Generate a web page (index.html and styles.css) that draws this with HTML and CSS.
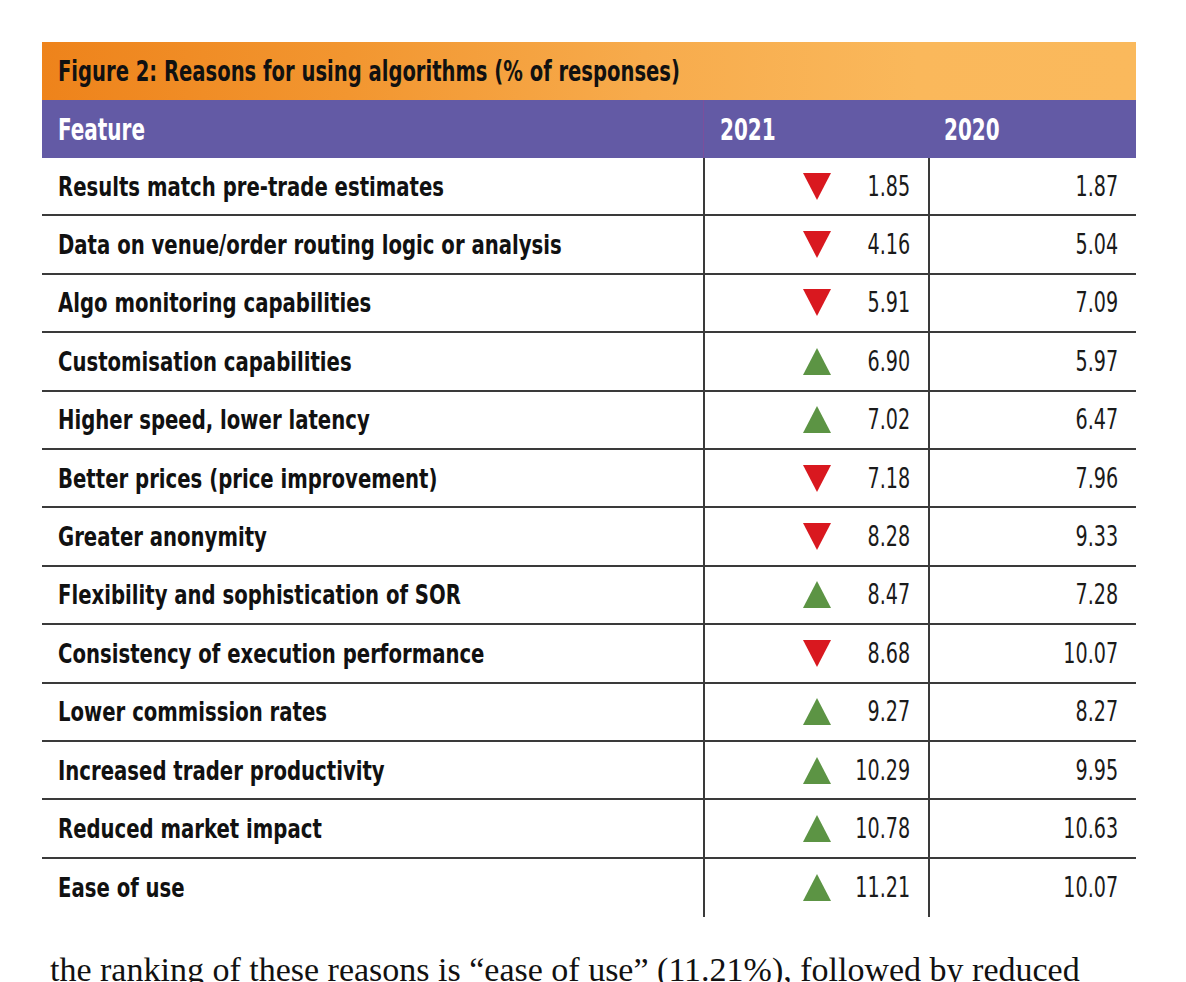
FILE: index.html
```html
<!DOCTYPE html>
<html lang="en">
<head>
<meta charset="utf-8">
<title>Figure 2: Reasons for using algorithms</title>
<link rel="stylesheet" href="styles.css">
</head>
<body>
<div class="figure">
  <div class="title"><span class="ttl">Figure 2: Reasons for using algorithms (% of responses)</span></div>
  <div class="head">
    <div class="hcell feat"><span class="hl">Feature</span></div>
    <div class="hcell y1"><span class="hl">2021</span></div>
    <div class="hcell y2"><span class="hl">2020</span></div>
  </div>
  <div class="row"><div class="cell feat"><span class="lbl">Results match pre-trade estimates</span></div><div class="cell v1"><span class="tri down"></span><span class="num">1.85</span></div><div class="cell v2"><span class="num">1.87</span></div></div>
  <div class="row"><div class="cell feat"><span class="lbl">Data on venue/order routing logic or analysis</span></div><div class="cell v1"><span class="tri down"></span><span class="num">4.16</span></div><div class="cell v2"><span class="num">5.04</span></div></div>
  <div class="row"><div class="cell feat"><span class="lbl">Algo monitoring capabilities</span></div><div class="cell v1"><span class="tri down"></span><span class="num">5.91</span></div><div class="cell v2"><span class="num">7.09</span></div></div>
  <div class="row"><div class="cell feat"><span class="lbl">Customisation capabilities</span></div><div class="cell v1"><span class="tri up"></span><span class="num">6.90</span></div><div class="cell v2"><span class="num">5.97</span></div></div>
  <div class="row"><div class="cell feat"><span class="lbl">Higher speed, lower latency</span></div><div class="cell v1"><span class="tri up"></span><span class="num">7.02</span></div><div class="cell v2"><span class="num">6.47</span></div></div>
  <div class="row"><div class="cell feat"><span class="lbl">Better prices (price improvement)</span></div><div class="cell v1"><span class="tri down"></span><span class="num">7.18</span></div><div class="cell v2"><span class="num">7.96</span></div></div>
  <div class="row"><div class="cell feat"><span class="lbl">Greater anonymity</span></div><div class="cell v1"><span class="tri down"></span><span class="num">8.28</span></div><div class="cell v2"><span class="num">9.33</span></div></div>
  <div class="row"><div class="cell feat"><span class="lbl">Flexibility and sophistication of SOR</span></div><div class="cell v1"><span class="tri up"></span><span class="num">8.47</span></div><div class="cell v2"><span class="num">7.28</span></div></div>
  <div class="row"><div class="cell feat"><span class="lbl">Consistency of execution performance</span></div><div class="cell v1"><span class="tri down"></span><span class="num">8.68</span></div><div class="cell v2"><span class="num">10.07</span></div></div>
  <div class="row"><div class="cell feat"><span class="lbl">Lower commission rates</span></div><div class="cell v1"><span class="tri up"></span><span class="num">9.27</span></div><div class="cell v2"><span class="num">8.27</span></div></div>
  <div class="row"><div class="cell feat"><span class="lbl">Increased trader productivity</span></div><div class="cell v1"><span class="tri up"></span><span class="num">10.29</span></div><div class="cell v2"><span class="num">9.95</span></div></div>
  <div class="row"><div class="cell feat"><span class="lbl">Reduced market impact</span></div><div class="cell v1"><span class="tri up"></span><span class="num">10.78</span></div><div class="cell v2"><span class="num">10.63</span></div></div>
  <div class="row last"><div class="cell feat"><span class="lbl">Ease of use</span></div><div class="cell v1"><span class="tri up"></span><span class="num">11.21</span></div><div class="cell v2"><span class="num">10.07</span></div></div>
</div>
<p class="body-text">the ranking of these reasons is “ease of use” (11.21%), followed by reduced market impact and increased trader productivity.</p>
</body>
</html>
```

FILE: styles.css
```css
html, body {
  margin: 0;
  padding: 0;
  background: #ffffff;
}

.figure {
  margin: 42px 0 0 42px;
  width: 1094px;
  font-family: "DejaVu Sans Condensed", "DejaVu Sans", sans-serif;
  color: #111111;
}

.title {
  height: 58px;
  display: flex;
  align-items: center;
  padding-left: 16px;
  box-sizing: border-box;
  background: linear-gradient(to right, #ee831b 0%, #f29630 28%, #f7ab4c 55%, #fab85b 80%, #fab95c 100%);
  font-weight: 700;
  font-size: 29px;
  color: #111111;
}

.ttl {
  display: inline-block;
  white-space: nowrap;
  transform: scaleX(0.75);
  transform-origin: left center;
}

.head {
  height: 58px;
  display: grid;
  grid-template-columns: 661px 225px 208px;
  background: #635aa5;
  color: #ffffff;
  font-weight: 700;
  font-size: 30px;
}

.hcell {
  display: flex;
  align-items: center;
  padding-left: 16px;
}

.hl {
  display: inline-block;
  white-space: nowrap;
  transform: scaleX(0.74);
  transform-origin: left center;
}

.hcell.y1 {
  border-left: 1px solid #7b4f9c;
}

.row {
  height: 58.4px;
  box-sizing: border-box;
  display: grid;
  grid-template-columns: 661px 225px 208px;
  border-bottom: 2px solid #3a3a3a;
}

.row.last {
  border-bottom: none;
}

.cell {
  display: flex;
  align-items: center;
}

.cell.feat {
  padding-left: 16px;
  font-weight: 700;
  font-size: 27px;
  color: #111111;
}

.lbl {
  display: inline-block;
  white-space: nowrap;
  transform: scaleX(0.81);
  transform-origin: left center;
}

.cell.v1,
.cell.v2 {
  border-left: 2px solid #3a3a3a;
  justify-content: flex-end;
  padding-right: 18px;
}

.num {
  display: inline-block;
  font-weight: 400;
  font-size: 28px;
  color: #1a1a1a;
  transform: scaleX(0.76);
  transform-origin: right center;
}

.tri {
  margin-right: auto;
  margin-left: 98px;
  width: 0;
  height: 0;
  border-left: 14.5px solid transparent;
  border-right: 14.5px solid transparent;
}

.tri.down {
  border-top: 27px solid #d9181f;
}

.tri.up {
  border-bottom: 27px solid #5c9444;
}

.body-text {
  margin: 34px 0 0 50px;
  width: 1100px;
  font-family: "Liberation Serif", serif;
  font-size: 34px;
  color: #111111;
}
```
